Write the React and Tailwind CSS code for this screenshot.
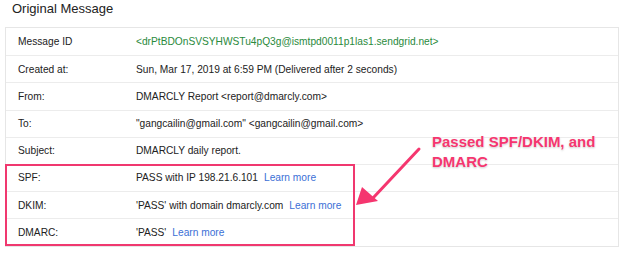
const rows = [
  { label: 'Message ID', value: <span className="text-[#2a8a3c]">{'<drPtBDOnSVSYHWSTu4pQ3g@ismtpd0011p1las1.sendgrid.net>'}</span> },
  { label: 'Created at:', value: 'Sun, Mar 17, 2019 at 6:59 PM (Delivered after 2 seconds)' },
  { label: 'From:', value: 'DMARCLY Report <report@dmarcly.com>' },
  { label: 'To:', value: '"gangcailin@gmail.com" <gangcailin@gmail.com>' },
  { label: 'Subject:', value: 'DMARCLY daily report.' },
  { label: 'SPF:', value: 'PASS with IP 198.21.6.101', link: true },
  { label: 'DKIM:', value: "'PASS' with domain dmarcly.com", link: true },
  { label: 'DMARC:', value: "'PASS'", link: true },
]

export default function App() {
  return (
    <div className="w-[624px] h-[255px] bg-white text-[#222] overflow-hidden" style={{ fontFamily: '"Liberation Sans", Arial, sans-serif' }}>
      <h1 className="pl-3 h-[27px] text-[13px] leading-[17px]">Original Message</h1>

      <div className="relative ml-[5px] w-[614px] border border-[#e6e6e6]">
        {rows.map((r, i) => (
          <div key={r.label} className={`flex items-center h-[27.2px] text-[10.2px] ${i > 0 ? 'border-t border-[#ececec]' : ''}`}>
            <div className="w-[130px] pl-[12px]">{r.label}</div>
            <div className="flex-1">
              {r.value}
              {r.link && <span className="ml-[6px] text-[#3b6fd6]">Learn more</span>}
            </div>
          </div>
        ))}

        {/* highlight box */}
        <div className="absolute left-[-1px] top-[136px] w-[350px] h-[82px] border-2 border-[#f0386f]" />

        {/* annotation */}
        <div
          className="absolute left-[426px] top-[104px] text-[15px] leading-[20px] font-bold text-[#f5366f]"
          style={{ textShadow: '0 0 2px #fff, 0 1px 2px rgba(0,0,0,0.25)' }}
        >
          Passed SPF/DKIM, and
          <br />
          DMARC
        </div>

        <svg className="absolute left-[340px] top-[114px]" width="90" height="70" viewBox="0 0 90 70">
          <path d="M73 7 L27 56" stroke="#f5366f" strokeWidth="3" strokeLinecap="round" />
          <path d="M10 63 L16 45 L32 59 Z" fill="#f5366f" />
        </svg>
      </div>
    </div>
  )
}
